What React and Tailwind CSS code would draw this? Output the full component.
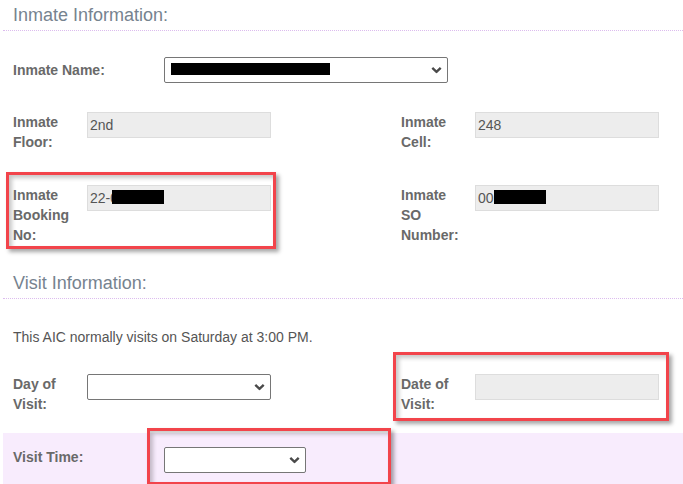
import React from "react";

const Chevron = () => (
  <svg width="11" height="7" viewBox="0 0 11 7" className="absolute right-[5px] top-1/2 -translate-y-1/2">
    <path d="M1.3 1.3 L5.5 5.3 L9.7 1.3" fill="none" stroke="#4a4a4a" strokeWidth="2.4" />
  </svg>
);

const Select = ({ className, children }) => (
  <div className={"relative shrink-0 bg-white border border-[#767676] rounded-[2px] " + className}>
    {children}
    <Chevron />
  </div>
);

const Input = ({ children }) => (
  <div className="relative w-[184px] h-[26px] shrink-0 bg-[#ededed] border border-[#dddddd] pl-[2px] flex items-center text-[14px] text-[#555] leading-[20px]">
    {children}
  </div>
);

const Label = ({ children, className = "" }) => (
  <div className={"w-[64px] mr-[10px] shrink-0 font-bold text-[14px] leading-[20px] text-[#696969] " + className}>
    {children}
  </div>
);

const Heading = ({ children, className = "" }) => (
  <div className={"pt-[4px] pb-[4px] pl-[10px] text-[18px] leading-[22px] text-[#76838f] border-b border-dotted border-[#dcbcee] " + className}>
    {children}
  </div>
);

const RedBox = ({ className }) => (
  <div
    className={
      "absolute border-[3px] border-[#f2444b] shadow-[3px_3px_4px_rgba(0,0,0,0.35),inset_3px_3px_4px_rgba(0,0,0,0.22)] pointer-events-none " +
      className
    }
  />
);

export default function App() {
  return (
    <div
      className="relative w-[683px] h-[484px] overflow-hidden bg-white"
      style={{ fontFamily: '"Liberation Sans", Arial, sans-serif' }}
    >
      <div className="ml-[3px]">
        <Heading>Inmate Information:</Heading>

        {/* Inmate Name */}
        <div className="mt-[26px] pl-[10px] flex items-center">
          <div className="w-[151px] shrink-0 font-bold text-[14px] leading-[20px] text-[#696969]">Inmate Name:</div>
          <Select className="w-[284px] h-[26px]">
            <div className="absolute left-[6px] top-[5px] w-[159px] h-[12px] bg-black" />
          </Select>
        </div>

        {/* Floor / Cell */}
        <div className="mt-[29px] pl-[10px] flex items-start">
          <Label>Inmate Floor:</Label>
          <Input>2nd</Input>
          <div className="w-[130px] shrink-0" />
          <Label>Inmate Cell:</Label>
          <Input>248</Input>
        </div>

        {/* Booking / SO */}
        <div className="mt-[33px] pl-[10px] flex items-start">
          <Label>Inmate Booking No:</Label>
          <Input>
            <span>22-0</span>
            <div className="absolute left-[24px] top-[4px] w-[52px] h-[14px] bg-black" />
          </Input>
          <div className="w-[130px] shrink-0" />
          <Label>Inmate SO Number:</Label>
          <Input>
            <span>00</span>
            <div className="absolute left-[18px] top-[4px] w-[52px] h-[14px] bg-black" />
          </Input>
        </div>

        <Heading className="mt-[23px]">Visit Information:</Heading>

        <div className="mt-[28px] pl-[10px] text-[14px] leading-[20px] text-[#555]">
          This AIC normally visits on Saturday at 3:00 PM.
        </div>

        {/* Day / Date */}
        <div className="mt-[27px] pl-[10px] flex items-start">
          <Label>Day of Visit:</Label>
          <Select className="w-[184px] h-[26px]" />
          <div className="w-[130px] shrink-0" />
          <Label>Date of Visit:</Label>
          <Input />
        </div>

        {/* Visit Time */}
        <div className="mt-[19px] pl-[10px] pt-[14px] pb-[14px] bg-[#f8ecfd] flex items-start">
          <div className="w-[151px] shrink-0 font-bold text-[14px] leading-[20px] text-[#696969]">Visit Time:</div>
          <Select className="w-[142px] h-[26px]" />
        </div>
      </div>

      <RedBox className="left-[6px] top-[172px] w-[270px] h-[77px]" />
      <RedBox className="left-[393px] top-[352px] w-[276px] h-[69px]" />
      <RedBox className="left-[147px] top-[428px] w-[244px] h-[57px]" />
    </div>
  );
}
